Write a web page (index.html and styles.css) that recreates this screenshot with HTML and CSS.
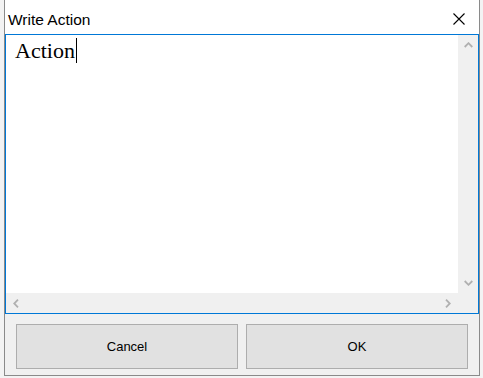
FILE: index.html
```html
<html>
<head>
<meta charset="utf-8"/>
<title>Write Action</title>
<link rel="stylesheet" href="styles.css">
</head>
<body>

<div class="window">
	<div class="titlebar">
		<span class="title">Write Action</span>
		<svg class="close" width="12" height="12" viewBox="0 0 12 12">
			<path d="M0.5 0.5L11.5 11.5M11.5 0.5L0.5 11.5" stroke="#000" stroke-width="1.1" fill="none"/>
		</svg>
	</div>

	<div class="editor">
		<div class="text">Action<span class="caret"></span></div>
		<div class="vscroll">
			<div class="arrow"><svg width="9" height="6" viewBox="0 0 9 6"><path d="M0.7 5L4.5 1.2L8.3 5" stroke="#b0b0b0" stroke-width="1.8" fill="none"/></svg></div>
			<div class="arrow"><svg width="9" height="6" viewBox="0 0 9 6"><path d="M0.7 1L4.5 4.8L8.3 1" stroke="#b0b0b0" stroke-width="1.8" fill="none"/></svg></div>
		</div>
		<div class="hscroll">
			<div class="arrow"><svg width="6" height="9" viewBox="0 0 6 9"><path d="M5 0.7L1.2 4.5L5 8.3" stroke="#b0b0b0" stroke-width="1.8" fill="none"/></svg></div>
			<div class="arrow"><svg width="6" height="9" viewBox="0 0 6 9"><path d="M1 0.7L4.8 4.5L1 8.3" stroke="#b0b0b0" stroke-width="1.8" fill="none"/></svg></div>
		</div>
		<div class="corner"></div>
	</div>

	<div class="buttons">
		<div class="button">Cancel</div>
		<div class="button">OK</div>
	</div>
</div>

</body>
</html>
```

FILE: styles.css
```css
body {
	margin: 0;
	background-color: #f3f3f3;
	font-family: "Liberation Sans", Arial, sans-serif;
}
/* window */
.window {
	box-sizing: border-box;
	margin-left: 4px;
	width: 476px;
	height: 376px;
	border: 1px solid #8a8a8a;
	border-top: none;
	background-color: #f0f0f0;
	display: flex;
	flex-direction: column;
}
.titlebar {
	box-sizing: border-box;
	height: 34px;
	padding: 10px 14px 0 3px;
	background-color: #fff;
	display: flex;
	justify-content: space-between;
	align-items: flex-start;
}
.title {
	font-size: 15.5px;
	line-height: 20px;
	color: #000;
}
.close {
	margin-top: 3px;
}
/* editor */
.editor {
	box-sizing: border-box;
	height: 280px;
	border: 1px solid #0078d7;
	display: grid;
	grid-template-columns: 1fr 20px;
	grid-template-rows: 1fr 20px;
}
.text {
	background-color: #fff;
	padding: 3px 0 0 9px;
	font-family: "Liberation Serif", "Times New Roman", serif;
	font-size: 22px;
	line-height: 26px;
	color: #000;
}
.caret {
	display: inline-block;
	width: 1px;
	height: 25px;
	margin-left: 1px;
	background-color: #000;
	vertical-align: -5px;
}
.vscroll, .hscroll {
	background-color: #f0f0f0;
	display: flex;
	justify-content: space-between;
}
.vscroll {
	flex-direction: column;
}
.arrow {
	width: 20px;
	height: 20px;
	display: flex;
	align-items: center;
	justify-content: center;
}
.corner {
	background-color: #f0f0f0;
}
/* buttons */
.buttons {
	padding: 10px 11px 0 11px;
	display: flex;
	gap: 8px;
}
.button {
	box-sizing: border-box;
	width: 222px;
	height: 45px;
	border: 1px solid #adadad;
	background-color: #e1e1e1;
	font-size: 13px;
	color: #000;
	display: flex;
	align-items: center;
	justify-content: center;
}
```
